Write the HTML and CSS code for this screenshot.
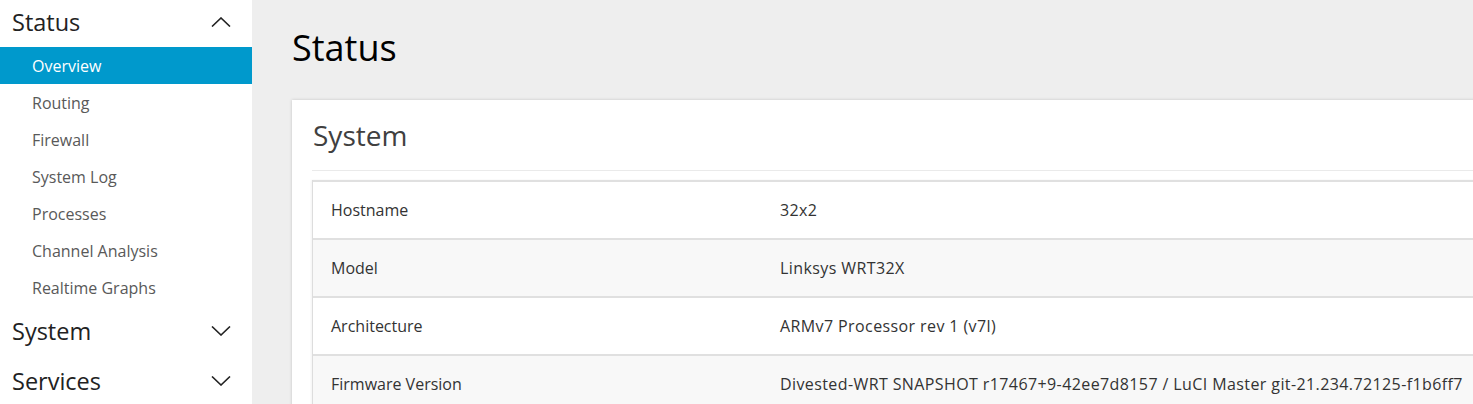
FILE: index.html
```html
<!DOCTYPE html>
<html lang="en">
<head>
<meta charset="utf-8">
<title>Status - Overview</title>
<link rel="stylesheet" href="styles.css">
</head>
<body>
<aside class="sidebar">
  <ul class="menu">
    <li class="group open">
      <div class="group-head">
        <span>Status</span>
        <svg class="chev" viewBox="0 0 20 10" width="20" height="10"><path d="M1 9.5 L10 1 L19 9.5" /></svg>
      </div>
      <ul class="sub">
        <li class="active">Overview</li>
        <li>Routing</li>
        <li>Firewall</li>
        <li>System Log</li>
        <li>Processes</li>
        <li>Channel Analysis</li>
        <li>Realtime Graphs</li>
      </ul>
    </li>
    <li class="group">
      <div class="group-head">
        <span>System</span>
        <svg class="chev" viewBox="0 0 20 10" width="20" height="10"><path d="M1 0.5 L10 9 L19 0.5" /></svg>
      </div>
    </li>
    <li class="group">
      <div class="group-head">
        <span>Services</span>
        <svg class="chev" viewBox="0 0 20 10" width="20" height="10"><path d="M1 0.5 L10 9 L19 0.5" /></svg>
      </div>
    </li>
  </ul>
</aside>
<main class="main">
  <h1 class="page-title">Status</h1>
  <section class="card">
    <h2 class="card-title">System</h2>
    <div class="table">
      <div class="row"><div class="key">Hostname</div><div class="val">32x2</div></div>
      <div class="row alt"><div class="key">Model</div><div class="val">Linksys WRT32X</div></div>
      <div class="row"><div class="key">Architecture</div><div class="val">ARMv7 Processor rev 1 (v7l)</div></div>
      <div class="row alt"><div class="key">Firmware Version</div><div class="val">Divested-WRT SNAPSHOT r17467+9-42ee7d8157 / LuCI Master git-21.234.72125-f1b6ff7</div></div>
    </div>
  </section>
</main>
</body>
</html>
```
FILE: styles.css
```css
* { box-sizing: border-box; }
html, body { margin: 0; padding: 0; }
body {
  display: flex;
  height: 404px;
  overflow: hidden;
  background: #eeeeee;
  font-family: "Open Sans", "Noto Sans", sans-serif;
  color: #333;
}
ul { list-style: none; margin: 0; padding: 0; }

.sidebar {
  width: 252px;
  flex: 0 0 252px;
  background: #fff;
  height: 100%;
}
.menu { margin-top: -3px; }
.group-head {
  height: 50px;
  display: flex;
  align-items: center;
  justify-content: space-between;
  padding: 0 21px 0 12px;
  font-size: 23.5px;
  color: #222;
}
.group-head span { line-height: 50px; }
.chev { display: block; }
.chev path { fill: none; stroke: #222; stroke-width: 1.6; }
.sub li {
  height: 37px;
  line-height: 37px;
  padding-top: 1px;
  padding-left: 32px;
  font-size: 16px;
  color: #595959;
}
.sub li.active {
  background: #0099cc;
  color: #fff;
}

.main {
  flex: 1 1 auto;
  min-width: 0;
  overflow: hidden;
  padding-left: 40px;
}
.page-title {
  margin: 0;
  height: 100px;
  line-height: 96px;
  font-size: 36px;
  font-weight: 400;
  color: #000;
}
.card {
  width: 1400px;
  background: #fff;
  box-shadow: 0 0 3px rgba(0, 0, 0, 0.18);
  padding: 0 0 0 20px;
  height: 320px;
}
.card-title {
  margin: 0 0 9px 0;
  height: 71px;
  line-height: 70px;
  font-size: 28px;
  font-weight: 400;
  color: #404040;
  padding-left: 1px;
  border-bottom: 1px solid #eaeaea;
}
.table {
  border-left: 1px solid #dddddd;
  box-shadow: -1px 0 2px rgba(0, 0, 0, 0.05);
}
.row {
  display: flex;
  height: 58px;
  border-top: 2px solid #e0e0e0;
  align-items: center;
  font-size: 16px;
  color: #333;
  background: #fff;
}
.row.alt { background: #f8f8f8; }
.key { width: 467px; padding-left: 18px; }
.val { white-space: nowrap; letter-spacing: 0.4px; }
```
